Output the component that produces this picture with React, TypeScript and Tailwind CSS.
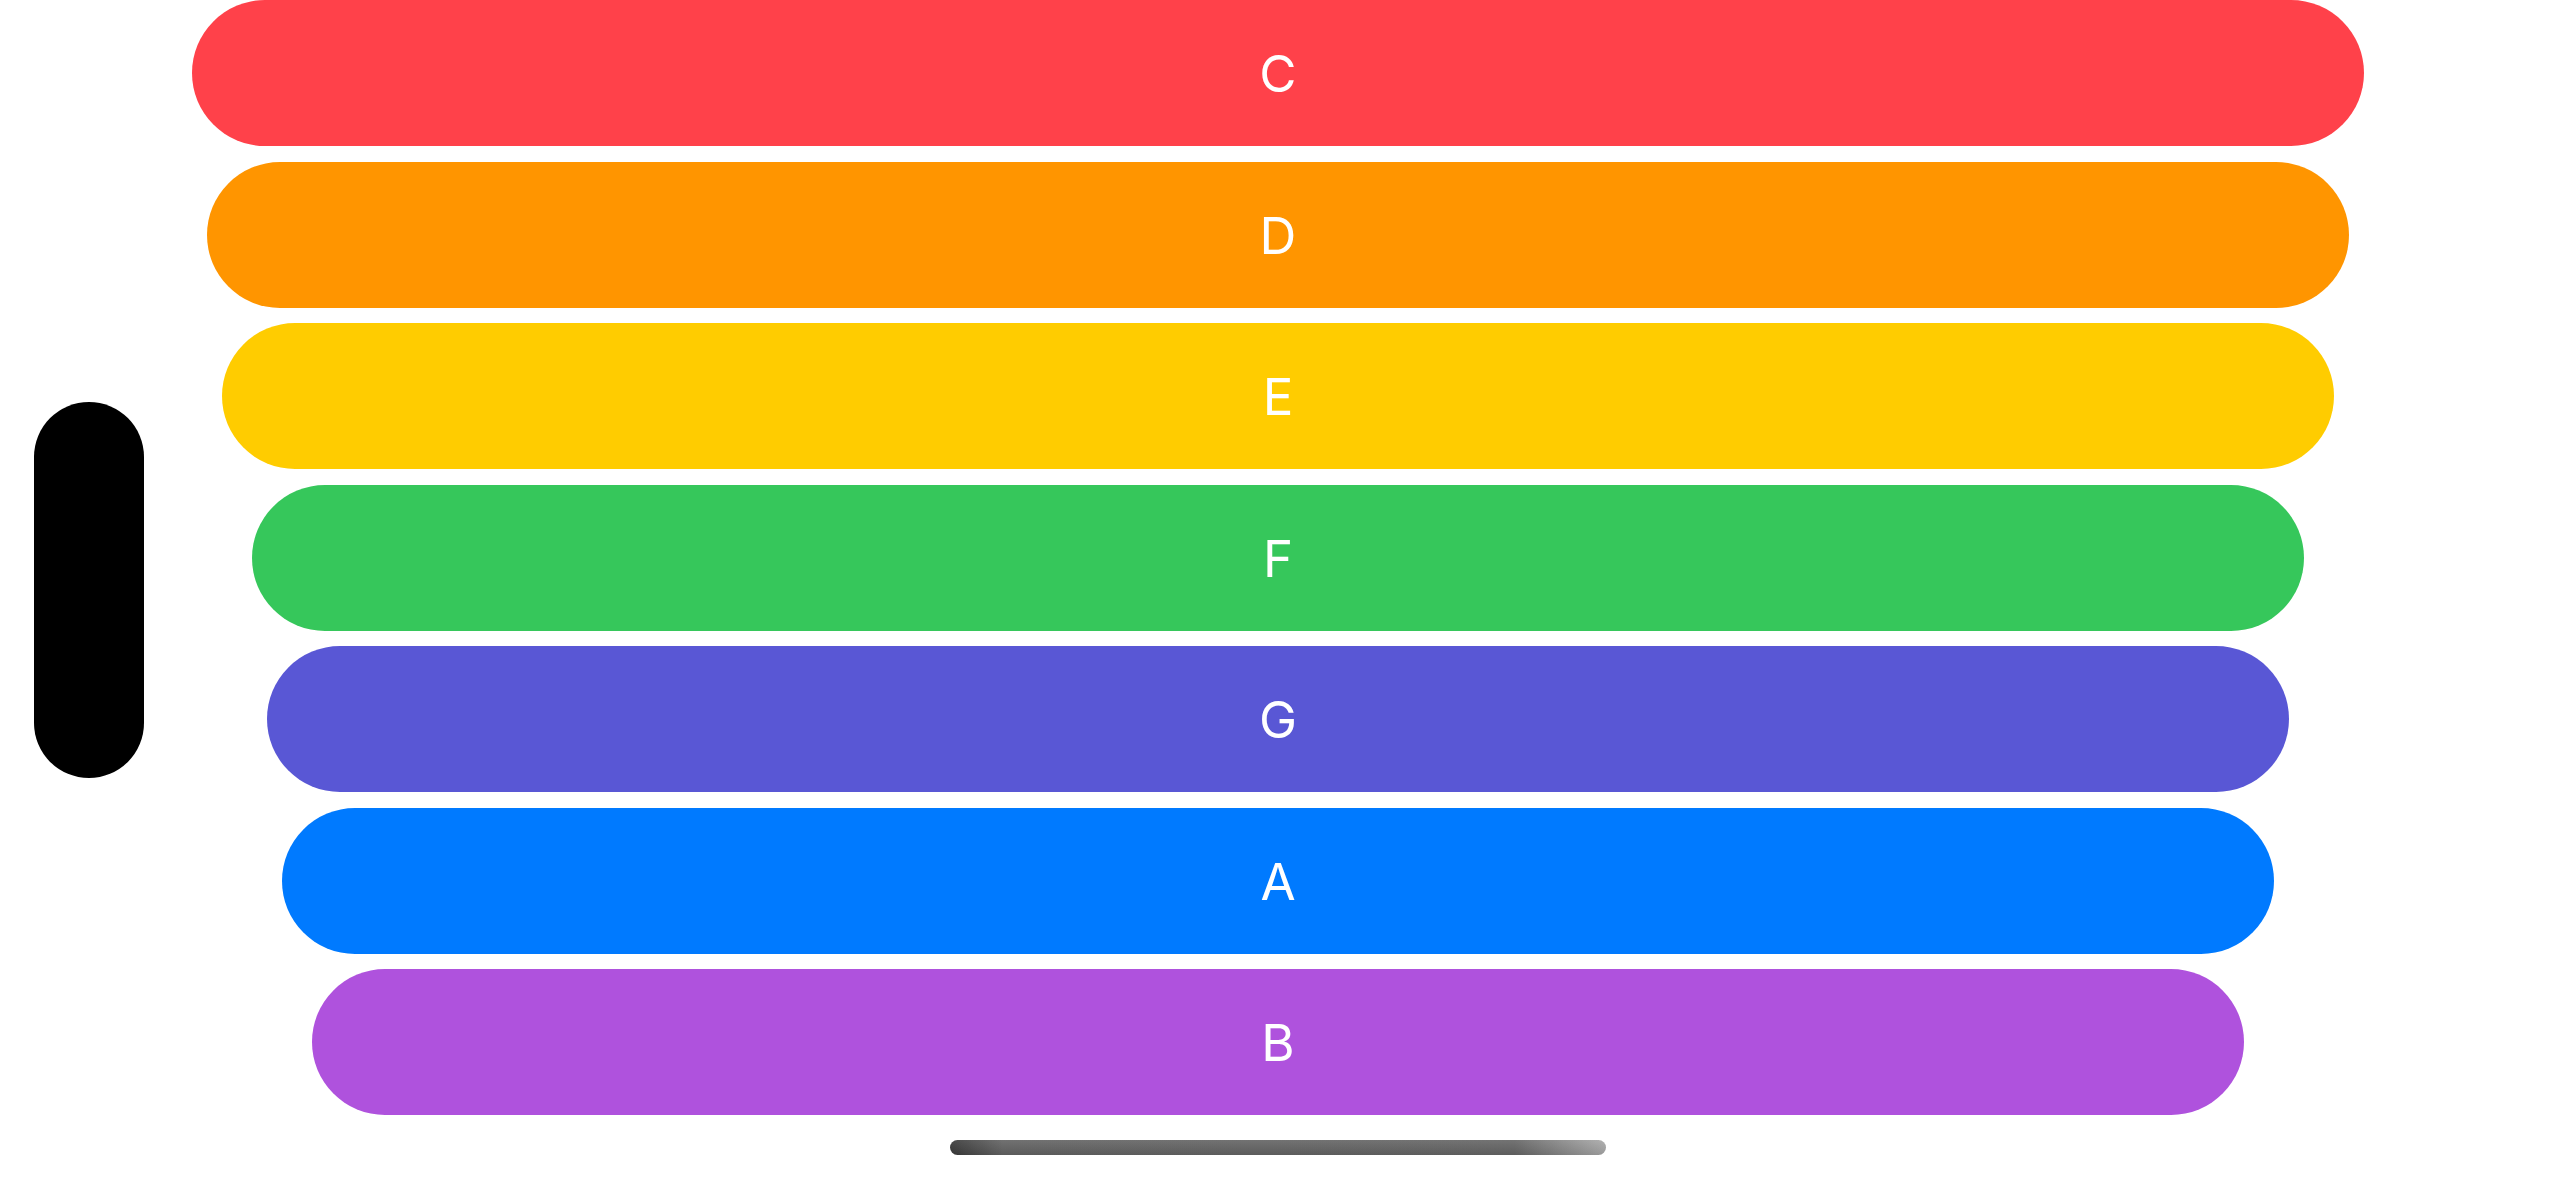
import React from 'react';

type Bar = {
  label: string;
  color: string;
  inset: string;
  gap: string;
};

// Rows in display order, widest first
const BARS: Bar[] = [
  { label: 'C', color: 'bg-[#ff414a]', inset: 'mx-0', gap: 'mt-0' },
  { label: 'D', color: 'bg-[#ff9500]', inset: 'mx-[15px]', gap: 'mt-[16px]' },
  { label: 'E', color: 'bg-[#ffcc00]', inset: 'mx-[30px]', gap: 'mt-[15px]' },
  { label: 'F', color: 'bg-[#36c75b]', inset: 'mx-[60px]', gap: 'mt-[16px]' },
  { label: 'G', color: 'bg-[#5957d5]', inset: 'mx-[75px]', gap: 'mt-[15px]' },
  { label: 'A', color: 'bg-[#007aff]', inset: 'mx-[90px]', gap: 'mt-[16px]' },
  { label: 'B', color: 'bg-[#af52dd]', inset: 'mx-[120px]', gap: 'mt-[15px]' },
];

const App = () => {
  return (
    <div className="w-[2556px] h-[1179px] bg-white overflow-hidden grid grid-cols-[192px_1fr_192px] font-['Inter','Noto_Sans',sans-serif]">
      {/* drag handle on the left */}
      <div className="flex items-center">
        <div className="ml-[34px] w-[110px] h-[376px] rounded-full bg-black" />
      </div>

      <div className="flex flex-col">
        {BARS.map((bar) => (
          <div
            key={bar.label}
            className={`${bar.color} ${bar.inset} ${bar.gap} h-[146px] rounded-full flex items-center justify-center`}
          >
            <span className="text-white text-[51px] leading-none font-normal">{bar.label}</span>
          </div>
        ))}

        {/* home indicator */}
        <div className="mt-[25px] mx-auto w-[656px] h-[15px] rounded-full bg-[linear-gradient(to_bottom,rgba(255,255,255,0.08),rgba(0,0,0,0.1)),linear-gradient(to_right,#3b3b3b,#656565_8%,#676767_86%,#ababab)]" />
      </div>

      <div />
    </div>
  );
};

export default App;
